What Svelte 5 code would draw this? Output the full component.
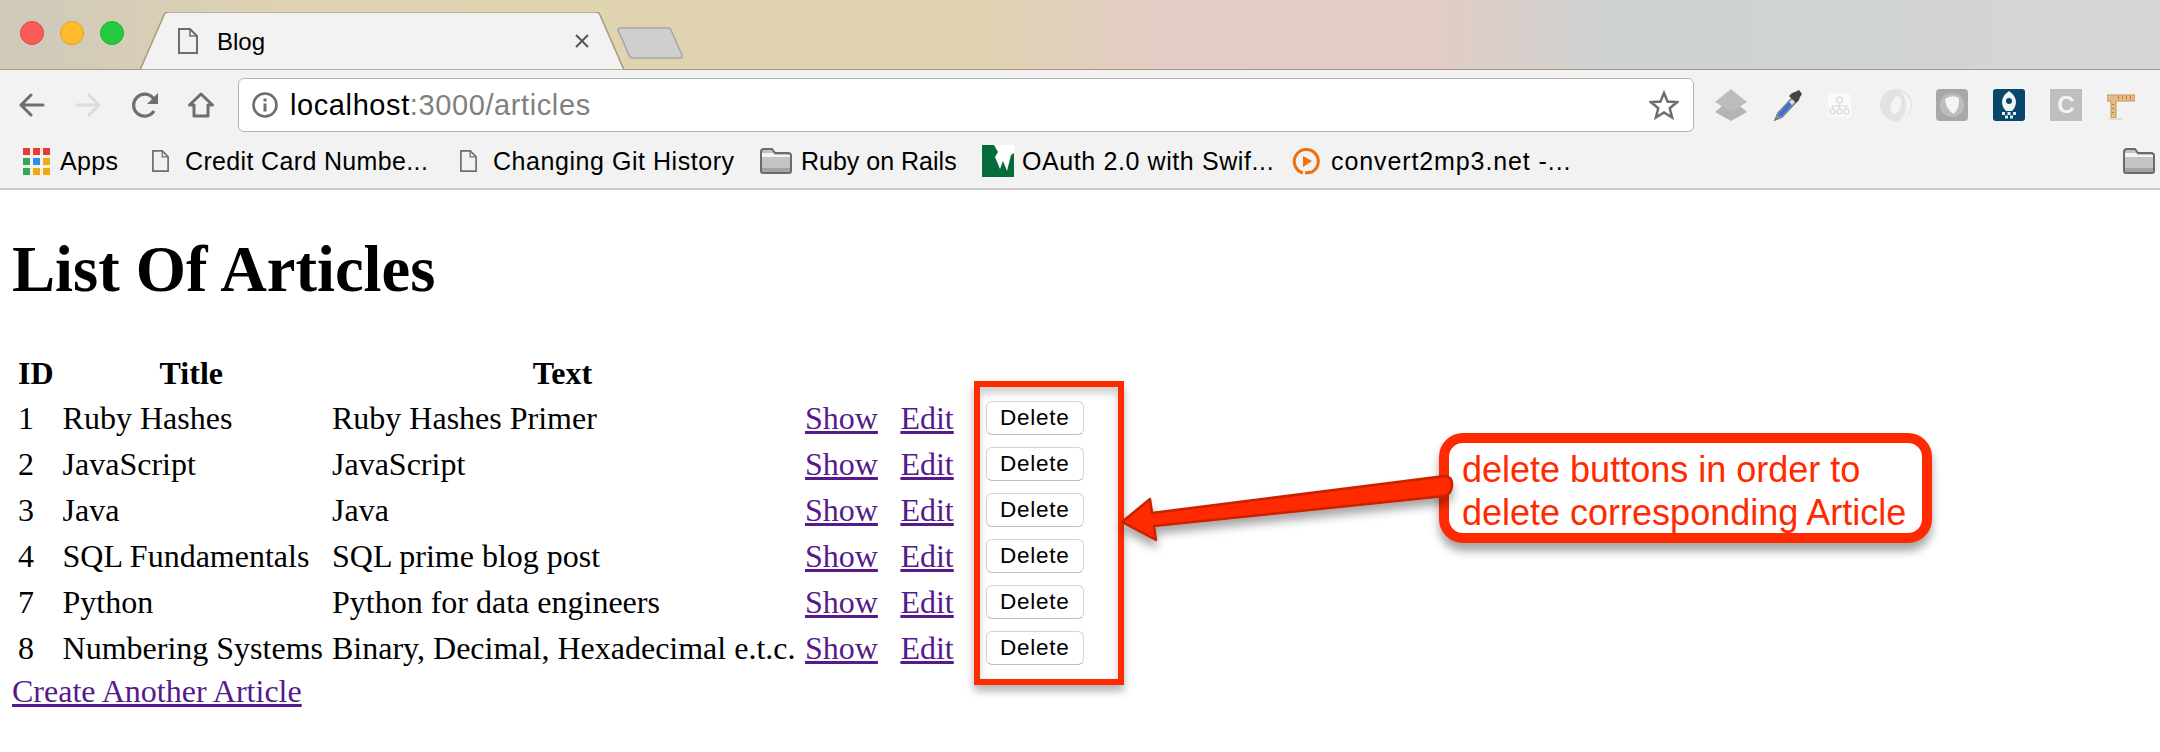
<script>
	const articles = [
		{ id: 1, title: 'Ruby Hashes', text: 'Ruby Hashes Primer' },
		{ id: 2, title: 'JavaScript', text: 'JavaScript' },
		{ id: 3, title: 'Java', text: 'Java' },
		{ id: 4, title: 'SQL Fundamentals', text: 'SQL prime blog post' },
		{ id: 7, title: 'Python', text: 'Python for data engineers' },
		{ id: 8, title: 'Numbering Systems', text: 'Binary, Decimal, Hexadecimal e.t.c.' }
	];

	const appColors = ['#ea3a34', '#ea3a34', '#ea3a34', '#34a853', '#2b8ef0', '#f4a80a', '#34a853', '#f4a80a', '#f4a80a'];
</script>

{#snippet doc(w, h)}
	<svg width={w} height={h} viewBox="0 0 20 26" fill="none" stroke="#6e6e6e" stroke-width="2">
		<path d="M1 1h11l7 7v17H1z" />
		<path d="M12 1v7h7" stroke-width="1.5" />
	</svg>
{/snippet}

{#snippet folder()}
	<svg width="32" height="26" viewBox="0 0 32 26">
		<path d="M1 4q0-3 3-3h8l3 4h13q3 0 3 3v15q0 2-2 2H3q-2 0-2-2z" fill="#c4c4c4" stroke="#6b6b6b" stroke-width="2" />
		<path d="M2 5h11l2 2h15v2H2z" fill="#f4f4f4" />
		<path d="M2 20h28v4H2z" fill="#a2a2a2" />
	</svg>
{/snippet}

<div class="browser">
	<div class="titlebar">
		<div class="lights">
			<span class="light red"></span>
			<span class="light yellow"></span>
			<span class="light green"></span>
		</div>
		<div class="tab">
			<svg class="tab-shape" width="484" height="58" viewBox="0 0 484 58">
				<path d="M0 58L24 3q1-3 5-3h426q4 0 5 3l24 55z" fill="#f2f2f2" stroke="#a8997f" stroke-width="1.5" />
			</svg>
			<span class="tab-icon">{@render doc(20, 26)}</span>
			<span class="tab-title">Blog</span>
			<svg class="tab-close" width="14" height="14" viewBox="0 0 14 14" stroke="#555" stroke-width="2"><path d="M1 1l12 12M13 1L1 13" /></svg>
		</div>
		<svg class="newtab" width="66" height="32" viewBox="0 0 66 32">
			<path d="M1 3q0-2 3-2h47q2 0 3 2l11 25q1 3-2 3H16q-3 0-4-3z" fill="#cfcfcf" stroke="#a5a5a5" stroke-width="1.5" />
		</svg>
	</div>

	<div class="toolbar">
		<svg class="tool" width="26" height="26" viewBox="0 0 26 26" fill="none" stroke="#6e6e6e" stroke-width="3" stroke-linecap="round" stroke-linejoin="round"><path d="M24 13H2M12 3L2 13l10 10" /></svg>
		<svg class="tool" width="26" height="26" viewBox="0 0 26 26" fill="none" stroke="#dcdcdc" stroke-width="3" stroke-linecap="round" stroke-linejoin="round"><path d="M2 13h22M14 3l10 10-10 10" /></svg>
		<svg class="tool" width="28" height="26" viewBox="0 0 28 26" fill="none" stroke="#6e6e6e" stroke-width="3.2"><path d="M23 19a11 11 0 1 1-1-13l2 3" /><path d="M27 1v11H16z" fill="#6e6e6e" stroke="none" /></svg>
		<svg class="tool" width="26" height="26" viewBox="0 0 26 26" fill="none" stroke="#6e6e6e" stroke-width="3" stroke-linejoin="round"><path d="M1.5 13L13 2l11.500 11H20v11H6V13z" /></svg>
		<div class="omnibox">
			<svg width="26" height="26" viewBox="0 0 26 26" fill="none" stroke="#6e6e6e" stroke-width="2.600">
				<circle cx="13" cy="13" r="11.500" />
				<path d="M13 11.500v8M13 6.500v3" stroke-width="3" />
			</svg>
			<span class="url">localhost<span class="url-rest">:3000/articles</span></span>
			<svg class="star" width="30" height="30" viewBox="0 0 30 30" fill="none" stroke="#6e6e6e" stroke-width="2.500" stroke-linejoin="miter">
				<path d="M15 3l3.500 8.500 9.500.7-7.300 6 2.400 9.300L15 22.500 6.900 27.500l2.400-9.300-7.300-6 9.500-.7z" />
			</svg>
		</div>
		<div class="extensions">
			<svg width="32" height="32" viewBox="0 0 32 32"><path d="M16 10l16 13-16 9L0 23z" fill="#b4b4b4" /><path d="M16 0l16 13-16 10L0 13z" fill="#bdbdbd" /></svg>
			<svg class="ext-dropper" width="30" height="32" viewBox="0 0 30 32">
				<path d="M20 8L5 24l-3 7 7-3 15-16z" fill="#d5d9e2" stroke="#777" stroke-width="1.500" />
				<path d="M16 13L6 24l-2 5 5-2 10-11z" fill="#3e70d4" />
				<path d="M16 7l7 7 3-3 1-3 2-3-3-4-4 2-3 1z" fill="#444" />
			</svg>
			<svg class="ext-org" width="23" height="23" viewBox="0 0 23 23" fill="none" stroke="#d8d8d8" stroke-width="1.200">
				<rect x="0" y="0" width="23" height="23" rx="3" fill="#fafafa" stroke="none" />
				<circle cx="11.500" cy="6" r="3" /><circle cx="4.500" cy="17.500" r="2.500" /><circle cx="11.500" cy="17.500" r="2.500" /><circle cx="18.500" cy="17.500" r="2.500" />
				<path d="M11.500 9v6M4.500 15v-3h14v3" />
			</svg>
			<svg class="ext-ring" width="32" height="32" viewBox="0 0 32 32">
				<circle cx="16" cy="16" r="16" fill="#e2e2e2" />
				<path d="M21 2q10 6 10 15-1 11-12 15 7-6 7-15 0-9-5-15z" fill="#f3f3f3" />
				<ellipse cx="16" cy="16" rx="5" ry="9" transform="rotate(18 16 16)" fill="#f4f4f4" />
			</svg>
			<svg width="32" height="32" viewBox="0 0 32 32">
				<rect width="32" height="32" rx="4" fill="#a8a8a8" />
				<circle cx="16" cy="16" r="12" fill="#bcbcbc" />
				<path d="M9 10q7-5 14-1 1 9-5 16-8-4-9-15z" fill="#f4f4f4" />
			</svg>
			<svg width="32" height="32" viewBox="0 0 32 32">
				<rect width="32" height="32" rx="3" fill="#06476a" />
				<path d="M16 2q7 5 7 11 0 5-4 9h-6q-4-4-4-9 0-6 7-11z" fill="#f2f5f7" />
				<circle cx="16" cy="12" r="3" fill="#06476a" />
				<path d="M9 23h3v3H9zM14.500 23h3v3h-3zM20 23h3v3h-3zM12 26.500h3v3h-3zM17 26.500h3v3h-3z" fill="#e8eef2" />
			</svg>
			<div class="ext-c">C</div>
			<svg width="28" height="32" viewBox="0 0 28 32">
				<path d="M0 6h28v6H9v17H4V12H0z" fill="#e6bb88" stroke="#c8935a" stroke-width="1" />
				<path d="M11 7h1v3h-1zM15 7h1v3h-1zM19 7h1v3h-1zM23 7h1v3h-1zM5 15h2v1H5zM5 19h2v1H5zM5 23h2v1H5z" fill="#b57f45" />
				<path d="M2 29h14v2H2z" fill="#dedede" />
			</svg>
		</div>
	</div>

	<div class="bookmarks">
		<div class="bm apps">
			<div class="apps-grid">
				{#each appColors as c}
					<span style="background: {c}"></span>
				{/each}
			</div>
			<span class="bm-text">Apps</span>
		</div>
		<div class="bm credit">
			{@render doc(17, 22)}
			<span class="bm-text">Credit Card Numbe...</span>
		</div>
		<div class="bm history">
			{@render doc(17, 22)}
			<span class="bm-text">Changing Git History</span>
		</div>
		<div class="bm rails">
			{@render folder()}
			<span class="bm-text">Ruby on Rails</span>
		</div>
		<div class="bm oauth">
			<svg width="32" height="32" viewBox="0 0 32 32">
				<rect width="32" height="32" fill="#056b3a" />
				<path d="M12 0h20v8l-3 2-4 16-4-10-3 8-5-12 3-5z" fill="#fff" />
			</svg>
			<span class="bm-text">OAuth 2.0 with Swif...</span>
		</div>
		<div class="bm convert">
			<svg width="33" height="27" viewBox="0 0 33 27" fill="none" stroke="#ee6f0c" stroke-width="3">
				<path d="M13 25a12 12 0 1 1 9-1l-7 1" />
				<path d="M13 8l9 5-9 6z" fill="#ee6f0c" stroke="none" />
			</svg>
			<span class="bm-text">convert2mp3.net -...</span>
		</div>
		<div class="bm-end">{@render folder()}</div>
	</div>
</div>

<main class="page">
	<h1>List Of Articles</h1>
	<table>
		<thead>
			<tr>
				<th>ID</th>
				<th>Title</th>
				<th>Text</th>
				<th colspan="3"></th>
			</tr>
		</thead>
		<tbody>
			{#each articles as a}
				<tr>
					<td>{a.id}</td>
					<td>{a.title}</td>
					<td>{a.text}</td>
					<td class="show"><a href="#show">Show</a></td>
					<td class="edit"><a href="#edit">Edit</a></td>
					<td class="del"><button>Delete</button></td>
				</tr>
			{/each}
		</tbody>
	</table>
	<a class="create" href="#new">Create Another Article</a>

	<!-- skitch style annotation on top of the page -->
	<div class="red-box"></div>
	<div class="callout">delete buttons in order to<br />delete corresponding Article</div>
	<svg class="arrow" width="360" height="90" viewBox="1110 465 360 90">
		<defs>
			<filter id="sh" x="-10%" y="-30%" width="120%" height="170%">
				<feDropShadow dx="0" dy="7" stdDeviation="5" flood-color="#000" flood-opacity="0.35" />
			</filter>
		</defs>
		<path d="M1122 522L1150 499L1152 513L1445 476Q1453 477 1452 486Q1451 494 1445 496L1154 526L1156 540Z" fill="#ff2a00" stroke="#c92200" stroke-width="2.500" stroke-linejoin="round" filter="url(#sh)" />
	</svg>
</main>

<style>
	:global(body) {
		margin: 0;
		background: #fff;
	}

	.browser {
		font-family: 'Liberation Sans', Arial, sans-serif;
		color: #000;
	}

	.titlebar {
		height: 70px;
		box-sizing: border-box;
		display: flex;
		align-items: flex-end;
		background: linear-gradient(90deg, #cfc9bb 0%, #dfd3b1 14%, #e0d4b0 44%, #e2cec4 53%, #e2cdc4 66%, #cdd2d2 75%, #d6d6d6 100%);
		border-bottom: 1px solid #a8997f;
		position: relative;
	}

	.lights {
		position: absolute;
		left: 20px;
		top: 21px;
		display: flex;
		gap: 16px;
	}

	.light {
		width: 24px;
		height: 24px;
		border-radius: 50%;
		box-sizing: border-box;
	}

	.red { background: #fc5b57; border: 1px solid #e0443e; }
	.yellow { background: #febb2e; border: 1px solid #dea123; }
	.green { background: #27c93f; border: 1px solid #1dad2b; }

	.tab {
		position: relative;
		margin-left: 140px;
		margin-bottom: -1px;
		width: 484px;
		height: 58px;
		display: flex;
		align-items: center;
	}

	.tab-shape {
		position: absolute;
		left: 0;
		top: 0;
	}

	.tab-icon {
		position: relative;
		margin-left: 38px;
		display: flex;
	}

	.tab-title {
		position: relative;
		margin-left: 19px;
		font-size: 24px;
		line-height: 28px;
		flex: 1;
		padding-top: 2px;
	}

	.tab-close {
		position: relative;
		margin-right: 35px;
	}

	.newtab {
		margin-left: -7px;
		margin-bottom: 10px;
	}

	.toolbar {
		height: 62px;
		box-sizing: border-box;
		background: #f2f2f2;
		display: flex;
		align-items: center;
		padding: 8px 0 0 19px;
	}

	.tool {
		margin-right: 30px;
		flex: none;
	}

	.tool:nth-child(3) { margin-right: 29px; }
	.tool:nth-child(4) { margin-right: 24px; }

	.omnibox {
		width: 1456px;
		height: 54px;
		box-sizing: border-box;
		background: #fff;
		border: 1px solid #b4b4b4;
		border-radius: 6px;
		display: flex;
		align-items: center;
		padding: 0 14px 0 13px;
		flex: none;
	}

	.url {
		margin-left: 12px;
		font-size: 29px;
		letter-spacing: 0.6px;
		flex: 1;
	}

	.url-rest { color: #808080; }

	.extensions {
		margin-left: 21px;
		display: flex;
		align-items: center;
		gap: 25px;
	}

	.ext-dropper { margin-left: 1px; }
	.ext-org { margin-right: 4px; }
	.ext-ring { margin-right: -1px; }

	.ext-c {
		width: 32px;
		height: 32px;
		background: #bfbfbf;
		color: #f4f4f4;
		font-weight: bold;
		font-size: 24px;
		line-height: 32px;
		text-align: center;
	}

	.bookmarks {
		height: 58px;
		box-sizing: border-box;
		background: #f2f2f2;
		border-bottom: 2px solid #c8c8c8;
		display: flex;
		align-items: center;
		padding: 2px 0 0 23px;
	}

	.bm {
		display: flex;
		align-items: center;
		gap: 16px;
		flex: none;
	}

	.bm-text {
		font-size: 25px;
		letter-spacing: 0.35px;
		line-height: 30px;
		white-space: nowrap;
	}

	.apps { gap: 10px; width: 129px; }
	.credit { width: 308px; }
	.history { width: 300px; }
	.rails { width: 222px; gap: 9px; }
	.oauth { width: 308px; gap: 8px; }
	.convert { gap: 8px; }

	.history .bm-text { letter-spacing: 0.55px; }
	.rails .bm-text { letter-spacing: 0; }
	.oauth .bm-text { letter-spacing: 0.6px; }
	.convert .bm-text { letter-spacing: 0.9px; }

	.bm-end {
		margin-left: auto;
		margin-right: 5px;
		display: flex;
	}

	.apps-grid {
		display: grid;
		grid-template-columns: repeat(3, 7px);
		grid-auto-rows: 7px;
		gap: 3px;
	}

	.page {
		position: relative;
		box-sizing: border-box;
		padding: 42px 0 0 12px;
		font-family: 'Liberation Serif', 'Times New Roman', serif;
		font-size: 32px;
		color: #000;
	}

	h1 {
		margin: 0 0 46px;
		font-size: 64.6px;
		line-height: 74px;
		font-weight: bold;
	}

	table {
		border-collapse: separate;
		border-spacing: 0;
	}

	th {
		padding: 0 3px;
		height: 42.5px;
		font-weight: bold;
		text-align: center;
	}

	th:first-child {
		padding-left: 6px;
	}

	td {
		padding: 0 3px 0 6px;
		height: 46px;
		line-height: 36px;
	}

	tr td:first-child {
		padding-right: 10px;
	}

	td:nth-child(3) {
		padding-right: 3.5px;
	}

	a {
		color: #551a8b;
	}

	.show a { margin-right: 13.5px; }
	.edit a { margin-right: 15px; }

	.del {
		padding-left: 14px;
	}

	button {
		display: block;
		width: 98px;
		height: 34px;
		margin-top: 1px;
		padding: 0;
		background: #fff;
		border: 1px solid #d4d4d4;
		border-bottom-color: #bdbdbd;
		border-radius: 6px;
		font-family: 'Liberation Sans', Arial, sans-serif;
		font-size: 22.5px;
		letter-spacing: 0.7px;
		color: #000;
	}

	.create {
		display: block;
		width: max-content;
		margin-top: 2px;
		line-height: 36px;
	}

	.red-box {
		position: absolute;
		left: 974px;
		top: 191px;
		width: 150px;
		height: 304px;
		box-sizing: border-box;
		border: 6px solid #ff2a00;
		box-shadow: 0 6px 8px rgba(0, 0, 0, 0.3), inset 0 6px 8px rgba(0, 0, 0, 0.2);
	}

	.arrow {
		position: absolute;
		left: 1110px;
		top: 275px;
	}

	.callout {
		position: absolute;
		left: 1439px;
		top: 243px;
		width: 493px;
		height: 110px;
		box-sizing: border-box;
		padding: 5px 0 0 13px;
		background: #fff;
		border: 10px solid #ff2a00;
		border-radius: 24px;
		box-shadow: 0 8px 10px rgba(0, 0, 0, 0.35);
		font-family: 'Liberation Sans', Arial, sans-serif;
		font-size: 36px;
		line-height: 43px;
		color: #ff2a00;
		white-space: nowrap;
	}
</style>
